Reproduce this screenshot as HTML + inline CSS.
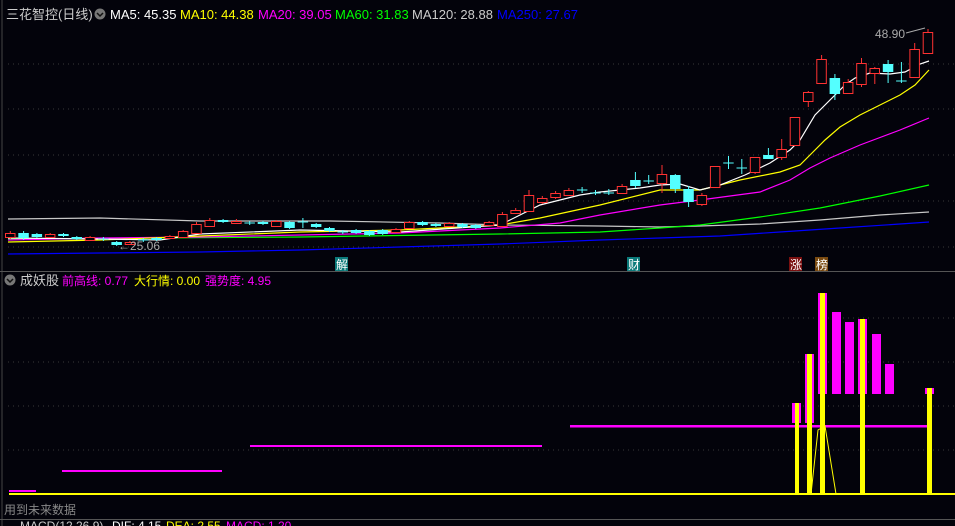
<!DOCTYPE html>
<html><head><meta charset="utf-8"><style>
html,body{margin:0;padding:0;background:#03030b;width:955px;height:526px;overflow:hidden}
svg{display:block}
text{font-family:"Liberation Sans","Noto Sans CJK SC",sans-serif}
</style></head><body>
<svg id="s" width="955" height="526" xmlns="http://www.w3.org/2000/svg">
<rect width="955" height="526" fill="#03030b"/>
<g stroke="#3a3a3a" stroke-dasharray="1,4">
<line x1="8" y1="64" x2="955" y2="64"/><line x1="8" y1="109" x2="955" y2="109"/><line x1="8" y1="155" x2="955" y2="155"/><line x1="8" y1="201" x2="955" y2="201"/><line x1="8" y1="247" x2="955" y2="247"/>
<line x1="8" y1="318" x2="955" y2="318"/><line x1="8" y1="362" x2="955" y2="362"/><line x1="8" y1="406" x2="955" y2="406"/><line x1="8" y1="450" x2="955" y2="450"/>
</g>
<line x1="2" y1="0" x2="2" y2="526" stroke="#444"/>
<line x1="0" y1="271.5" x2="955" y2="271.5" stroke="#555"/>
<line x1="0" y1="519.5" x2="955" y2="519.5" stroke="#555"/>
<text x="6" y="19" font-size="13" fill="#ccc">三花智控(日线)</text>
<circle cx="100" cy="14" r="5.5" fill="#777"/><path d="M97 13l3 3 3-3" stroke="#111" fill="none" stroke-width="1.5"/>
<text y="19" font-size="13"><tspan x="110" fill="#fff">MA5: 45.35</tspan><tspan x="180" fill="#ff0">MA10: 44.38</tspan><tspan x="258" fill="#f0f">MA20: 39.05</tspan><tspan x="335" fill="#0f0">MA60: 31.83</tspan><tspan x="412" fill="#ccc">MA120: 28.88</tspan><tspan x="497" fill="#00f">MA250: 27.67</tspan></text>
<g fill="none" stroke-width="1.2">
<polyline stroke="#00f" points="8,254 100,253 200,252 300,250 400,247 500,244 600,240 660,238 720,236 780,232 840,228 900,224 929,222"/>
<polyline stroke="#c8c8c8" points="8,219 100,218 200,221 330,221 440,223 500,225 600,226 660,227 700,226 760,224 820,220 880,215 929,212"/>
<polyline stroke="#0f0" points="8,239 300,237 500,234 600,232 660,228 700,225 760,217 820,208 880,196 929,185"/>
<polyline stroke="#f0f" points="8,240 100,238 200,237 300,235 400,233 500,228 560,223 600,215 660,205 700,200 760,192 790,180 810,168 830,158 860,145 900,130 929,118"/>
<polyline stroke="#ff0" points="8,242 100,240 200,236 300,232 400,230 500,225 540,218 600,205 660,190 700,190 740,180 780,172 800,165 815,150 825,140 840,127 860,115 880,105 900,95 915,85 929,70"/>
<polyline stroke="#fff" points="8,238 100,239 160,240 200,234 300,230 400,232 500,225 520,215 540,205 560,200 580,195 600,192 620,190 640,188 660,185 680,184 700,190 720,185 745,175 770,163 790,150 800,140 815,115 825,105 835,95 845,85 855,78 870,73 890,74 905,72 920,64 929,61"/>
</g>
<g id="c"></g>
<text x="118" y="250" font-size="12" fill="#aaa">←25.06</text>
<text x="875" y="38" font-size="12" fill="#aaa">48.90</text>
<polyline points="906,33 925,28" stroke="#aaa" fill="none"/>
<rect x="335" y="257" width="13" height="14" fill="#0b7a7a"/><text x="336" y="269" font-size="12" fill="#fff">解</text>
<rect x="627" y="257" width="13" height="14" fill="#0b7a7a"/><text x="628" y="269" font-size="12" fill="#fff">财</text>
<rect x="789" y="257" width="13" height="14" fill="#7a1010"/><text x="790" y="269" font-size="12" fill="#fff">涨</text>
<rect x="815" y="257" width="13" height="14" fill="#7a4a10"/><text x="816" y="269" font-size="12" fill="#fff">榜</text>
<circle cx="10" cy="280" r="5.5" fill="#777"/><path d="M7 279l3 3 3-3" stroke="#111" fill="none" stroke-width="1.5"/>
<text y="285" font-size="12"><tspan x="20" fill="#ccc" font-size="13">成妖股</tspan><tspan x="62" fill="#f0f">前高线: 0.77</tspan><tspan x="134" fill="#ff0">大行情: 0.00</tspan><tspan x="205" fill="#f0f">强势度: 4.95</tspan></text>
<g fill="#f0f">
<rect x="9" y="490" width="27" height="2"/><rect x="62" y="470" width="160" height="2"/><rect x="250" y="445" width="292" height="2"/><rect x="570" y="425" width="357" height="2.5"/>
<rect x="792" y="403" width="9" height="20"/><rect x="805" y="354" width="9" height="69"/><rect x="818" y="293" width="9" height="101"/><rect x="832" y="312" width="9" height="82"/><rect x="845" y="322" width="9" height="72"/><rect x="858" y="319" width="9" height="75"/><rect x="872" y="334" width="9" height="60"/><rect x="885" y="364" width="9" height="30"/><rect x="925" y="388" width="9" height="6"/>
</g>
<g fill="#ff0">
<rect x="795" y="403" width="4" height="91"/><rect x="807" y="354" width="5" height="140"/><rect x="820" y="293" width="5" height="201"/><rect x="860" y="319" width="5" height="175"/><rect x="927" y="388" width="5" height="106"/>
<rect x="9" y="493" width="946" height="2"/>
</g>
<polyline points="811,494 818,430 825,426 836,494" stroke="#ff0" fill="none"/>
<text x="4" y="514" font-size="12" fill="#888">用到未来数据</text>
<text y="530" font-size="12"><tspan x="20" fill="#ccc">MACD(12,26,9)</tspan><tspan x="112" fill="#fff">DIF: 4.15</tspan><tspan x="166" fill="#ff0">DEA: 2.55</tspan><tspan x="226" fill="#f0f">MACD: 1.20</tspan></text>
</svg>
<script>
var d=[
[0,'r',233,237,231,239],[1,'c',233,238,231,240],[2,'c',234,237,233,238],[3,'r',234,237,233,238],[4,'c',234,236,233,237],[5,'c',237,239,236,240],[6,'r',237,240,236,241],[7,'x',239,239,237,241],[8,'c',242,245,241,246],[9,'r',242,244,241,245],[10,'x',240,240,238,242],[11,'c',238,240,237,241],[12,'r',236,238,235,239],[13,'r',231,237,230,238],[14,'r',224,233,222,234],[15,'r',220,226,218,227],[16,'c',220,222,219,223],[17,'r',221,223,219,224],[18,'x',223,223,221,225],[19,'c',222,224,221,225],[20,'r',221,226,220,227],[21,'c',222,228,221,229],[22,'x',222,222,218,228],[23,'c',224,227,223,228],[24,'c',228,231,227,232],[25,'x',232,232,230,234],[26,'c',230,233,229,234],[27,'c',231,235,230,236],[28,'c',230,234,229,235],[29,'r',229,232,228,233],[30,'r',222,228,221,229],[31,'c',222,225,221,226],[32,'c',224,226,223,227],[33,'r',223,226,222,227],[34,'c',224,227,223,228],[35,'c',225,228,224,229],[36,'r',222,225,221,226],[37,'r',214,226,212,227],[38,'r',210,213,208,214],[39,'r',195,211,190,212],[40,'r',198,202,196,204],[41,'r',193,197,191,199],[42,'r',190,195,188,196],[43,'x',190,190,187,193],[44,'x',193,193,190,195],[45,'x',193,193,189,195],[46,'r',186,193,184,194],[47,'c',180,186,172,188],[48,'x',181,181,175,184],
[49,'r',174,183,165,193],[50,'c',175,189,174,193],[51,'c',189,202,186,207],[52,'r',195,204,193,206],[53,'r',166,187,166,188],[54,'x',163,163,156,169],[55,'x',168,168,159,174],[56,'r',157,172,157,174],[57,'c',155,159,148,159],[58,'r',149,157,139,160],[59,'r',117,145,117,146],[60,'r',92,101,91,107],[61,'r',59,83,55,84],[62,'c',78,94,74,100],[63,'r',82,93,79,94],[64,'r',63,84,58,87],[65,'r',68,73,67,84],[66,'c',64,72,60,83],[67,'x',81,81,62,83],[68,'r',49,77,43,78],[69,'r',32,53,29,53]];
var g=document.getElementById('c'),h='';
d.forEach(function(a){var x=5+a[0]*13.3,w=10.5,cx=(x+w/2).toFixed(1);
var col=a[1]=='r'?'#ff3232':'#54ffff';
h+='<line x1="'+cx+'" y1="'+a[4]+'" x2="'+cx+'" y2="'+a[5]+'" stroke="'+col+'"/>';
if(a[1]=='r')h+='<rect x="'+(x+.5)+'" y="'+(a[2]+.5)+'" width="'+(w-1)+'" height="'+Math.max(1,a[3]-a[2])+'" fill="#03030b" stroke="'+col+'"/>';
else if(a[1]=='c')h+='<rect x="'+x+'" y="'+a[2]+'" width="'+w+'" height="'+Math.max(1,a[3]-a[2])+'" fill="'+col+'"/>';
else h+='<line x1="'+x+'" y1="'+a[2]+'" x2="'+(x+w)+'" y2="'+a[2]+'" stroke="#54ffff"/>';
});
g.innerHTML=h;
</script>
</body></html>
